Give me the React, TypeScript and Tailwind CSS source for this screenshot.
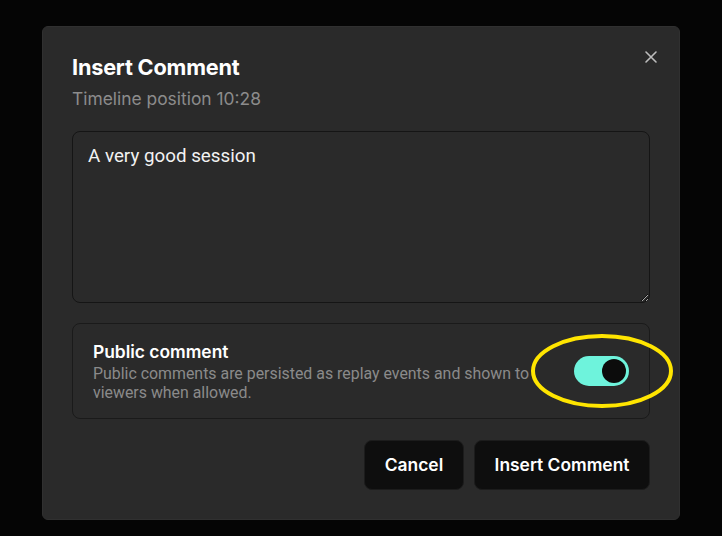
import { useState } from "react";

export default function App() {
  const [text, setText] = useState("A very good session");
  const [isPublic, setIsPublic] = useState(true);

  return (
    <div className="w-[722px] h-[536px] bg-[#050505] pt-[26px] pl-[42px] font-['Inter',sans-serif]">
      {/* Dialog */}
      <div className="relative w-[638px] h-[494px] bg-[#2a2a2a] rounded-md px-[29px] pt-[26px] border border-[#303030]">
        <button className="absolute top-[23px] right-[21px] text-[#bdbdbd] hover:text-white">
          <svg width="14" height="14" viewBox="0 0 14 14" fill="none" stroke="currentColor" strokeWidth="1.6" strokeLinecap="round">
            <path d="M2 2l10 10M12 2L2 12" />
          </svg>
        </button>

        <h2 className="text-[21.7px] leading-7 font-bold text-white tracking-[-0.2px]">Insert Comment</h2>
        <p className="mt-[6px] text-[17.4px] leading-6 text-[#8c8c8c]">Timeline position 10:28</p>

        <textarea
          value={text}
          onChange={(e) => setText(e.target.value)}
          className="mt-5 block w-full h-[172px] bg-[#2a2a2a] border border-[#151515] rounded-lg px-[15px] py-3 text-[18.8px] leading-6 text-[#f2f2f2] font-['Roboto',sans-serif] outline-none"
        />

        {/* Public toggle */}
        <div className="mt-5 h-[96px] border border-[#1a1a1a] rounded-lg pl-5 pr-5 py-4 flex items-center justify-between">
          <div className="w-[445px]">
            <div className="text-[17.4px] leading-6 font-semibold text-white">Public comment</div>
            <div className="text-[15.9px] leading-[19.5px] text-[#8a8a8a] font-['Roboto',sans-serif]">
              Public comments are persisted as replay events and shown to viewers when allowed.
            </div>
          </div>
          <div className="relative">
            <button
              onClick={() => setIsPublic(!isPublic)}
              className={`w-[55px] h-[30px] rounded-full flex items-center px-[3px] ${isPublic ? "bg-[#6ef3dc] justify-end" : "bg-[#444] justify-start"}`}
            >
              <span className="w-[24px] h-[24px] rounded-full bg-[#0c0c0c]" />
            </button>
            {/* highlight annotation */}
            <svg
              className="absolute left-[-45px] top-[-24px] pointer-events-none"
              width="146"
              height="78"
              viewBox="0 0 146 78"
            >
              <ellipse cx="73" cy="39" rx="69" ry="35" fill="none" stroke="#ffe500" strokeWidth="4" />
            </svg>
          </div>
        </div>

        {/* Actions */}
        <div className="mt-[21px] flex justify-end gap-[10px]">
          <button className="w-[100px] h-[50px] rounded-lg bg-[#0e0e0e] border border-[#1c1c1c] text-white text-[17.4px] font-semibold">
            Cancel
          </button>
          <button className="w-[176px] h-[50px] rounded-lg bg-[#0e0e0e] border border-[#1c1c1c] text-white text-[17.4px] font-semibold">
            Insert Comment
          </button>
        </div>
      </div>
    </div>
  );
}
